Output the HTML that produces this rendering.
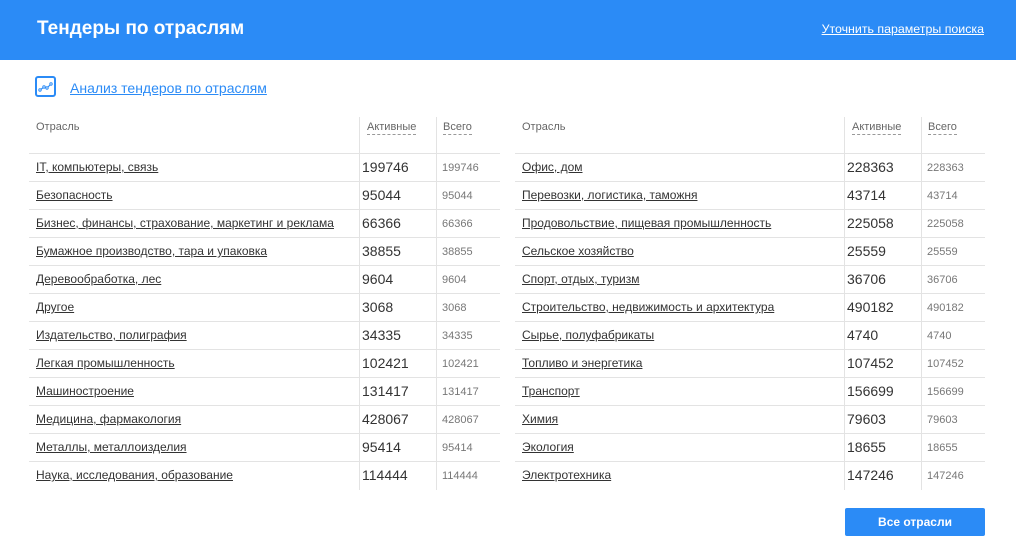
<!DOCTYPE html>
<html><head><meta charset="utf-8"><style>
*{margin:0;padding:0;box-sizing:border-box}
body{width:1016px;height:558px;background:#fff;font-family:"Liberation Sans",Arial,sans-serif;position:relative;overflow:hidden;color:#333}
.hd{position:absolute;left:0;top:0;width:1016px;height:60px;background:#2b8bf6}
.hd h1{position:absolute;left:37px;top:18px;font-size:19px;font-weight:bold;color:#fff}
.hd a{position:absolute;right:32px;top:22px;font-size:12.4px;color:#fff;text-decoration:underline}
.ic{position:absolute;left:35px;top:76px;width:21px;height:21px;border:2px solid #2b8bf6;border-radius:3px}
.an{position:absolute;left:70px;top:80px;font-size:14px;color:#2b8bf6;text-decoration:underline}
.t{position:absolute;top:117px}
.vl{position:absolute;top:0;width:1px;height:373px;background:#e3e3e3}
.th{position:absolute;top:4px;font-size:11px;color:#666}
.th.d{border-bottom:1px dashed #999;line-height:13px}
.r{position:absolute;height:28px;border-top:1px solid #e3e3e3}
.r span{position:absolute;top:6px;white-space:nowrap}
.n{font-size:12px;color:#333;text-decoration:underline;top:6px!important}
.a{font-size:14px;color:#333;top:5px!important}
.s{font-size:11px;color:#777;top:8px!important}
.btn{position:absolute;left:845px;top:508px;width:140px;height:28px;background:#2b8bf6;border-radius:2px;color:#fff;font-size:12px;text-align:center;line-height:28px;font-weight:bold}
</style></head><body>
<div class="hd"><h1>Тендеры по отраслям</h1><a>Уточнить параметры поиска</a></div>
<div class="ic"><svg width="17" height="17" viewBox="0 0 17 17" style="position:absolute;left:0;top:0"><path d="M3 12 L7 9 L10 10 L14 6" stroke="#2b8bf6" stroke-width="1.2" fill="none"/><circle cx="3" cy="12" r="1.2" fill="#fff" stroke="#2b8bf6"/><circle cx="7" cy="9" r="1.2" fill="#fff" stroke="#2b8bf6"/><circle cx="10" cy="10" r="1.2" fill="#fff" stroke="#2b8bf6"/><circle cx="14" cy="6" r="1.2" fill="#fff" stroke="#2b8bf6"/></svg></div>
<a class="an">Анализ тендеров по отраслям</a>
<div id="L" class="t" style="left:29px;width:471px"></div>
<div id="R" class="t" style="left:515px;width:470px"></div>
<div class="btn">Все отрасли</div>
<script>
function build(id,w,c1,c2,data){
 var el=document.getElementById(id),h='';
 h+='<div class="vl" style="left:'+c1+'px"></div><div class="vl" style="left:'+c2+'px"></div>';
 h+='<div class="th" style="left:7px">Отрасль</div><div class="th d" style="left:'+(c1+8)+'px">Активные</div><div class="th d" style="left:'+(c2+7)+'px">Всего</div>';
 data.forEach(function(d,i){
  h+='<div class="r" style="left:0;width:'+w+'px;top:'+(36+i*28)+'px"><span class="n" style="left:7px">'+d[0]+'</span><span class="a" style="left:'+(c1+3)+'px">'+d[1]+'</span><span class="s" style="left:'+(c2+6)+'px">'+d[1]+'</span></div>';
 });
 el.innerHTML=h;
}
build('L',471,330,407,[["IT, компьютеры, связь",199746],["Безопасность",95044],["Бизнес, финансы, страхование, маркетинг и реклама",66366],["Бумажное производство, тара и упаковка",38855],["Деревообработка, лес",9604],["Другое",3068],["Издательство, полиграфия",34335],["Легкая промышленность",102421],["Машиностроение",131417],["Медицина, фармакология",428067],["Металлы, металлоизделия",95414],["Наука, исследования, образование",114444]]);
build('R',470,329,406,[["Офис, дом",228363],["Перевозки, логистика, таможня",43714],["Продовольствие, пищевая промышленность",225058],["Сельское хозяйство",25559],["Спорт, отдых, туризм",36706],["Строительство, недвижимость и архитектура",490182],["Сырье, полуфабрикаты",4740],["Топливо и энергетика",107452],["Транспорт",156699],["Химия",79603],["Экология",18655],["Электротехника",147246]]);
</script>
</body></html>
